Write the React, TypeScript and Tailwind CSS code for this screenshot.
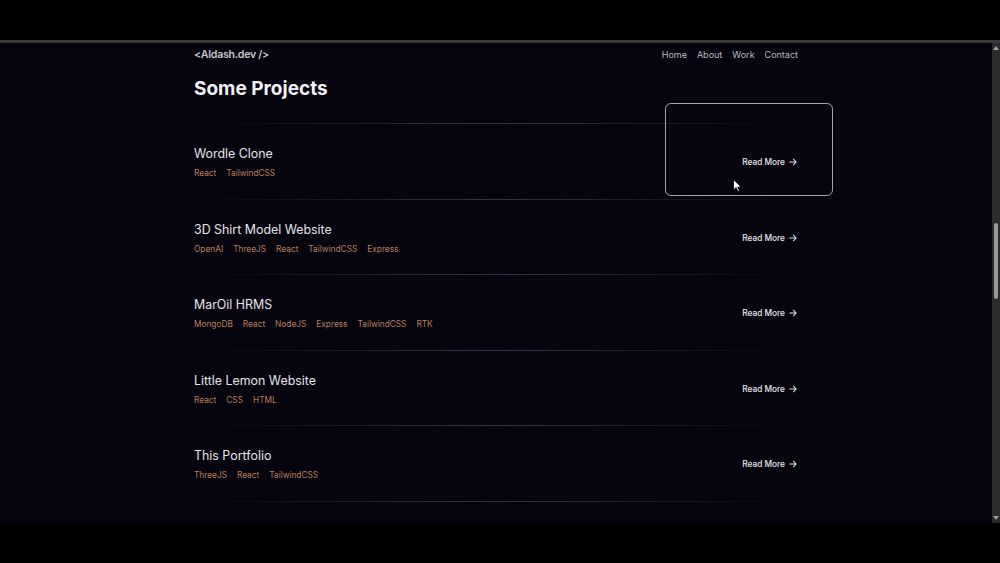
import React from "react";

const projects = [
  { title: "Wordle Clone", tags: ["React", "TailwindCSS"] },
  { title: "3D Shirt Model Website", tags: ["OpenAI", "ThreeJS", "React", "TailwindCSS", "Express"] },
  { title: "MarOil HRMS", tags: ["MongoDB", "React", "NodeJS", "Express", "TailwindCSS", "RTK"] },
  { title: "Little Lemon Website", tags: ["React", "CSS", "HTML"] },
  { title: "This Portfolio", tags: ["ThreeJS", "React", "TailwindCSS"] },
];

function Divider() {
  return <div className="h-px w-full bg-gradient-to-r from-transparent via-[#34344a] to-transparent" />;
}

function Arrow() {
  return (
    <svg width="8" height="8" viewBox="0 0 10 10" fill="none" stroke="#e8e8ec" strokeWidth="1.3" strokeLinecap="round" strokeLinejoin="round">
      <path d="M1 5h8M5.5 1.5 9 5l-3.5 3.5" />
    </svg>
  );
}

function Cursor() {
  return (
    <svg width="9" height="13" viewBox="0 0 9 13" className="absolute left-[539px] top-[56px] z-20">
      <path d="M0.5 0.5v10.5l2.6-2.4 1.8 4 1.6-.7-1.8-3.9h3.5z" fill="#ffffff" stroke="#000000" strokeWidth="0.8" />
    </svg>
  );
}

export default function App() {
  return (
    <div className="w-[1000px] h-[563px] bg-black flex flex-col overflow-hidden" style={{ fontFamily: "Inter, 'Noto Sans', sans-serif" }}>
      <div className="h-[40px] bg-black" />
      <div className="h-[3px] bg-[#3a3a3c]" />
      <div className="h-[480px] flex">
        <div className="flex-1 bg-[#05040f] overflow-hidden">
          <div className="w-[604px] mx-auto">
            <header className="h-[23px] flex items-center justify-between">
              <div className="text-[10.6px] font-semibold text-[#c9c9cf] tracking-tight">&lt;Aldash.dev /&gt;</div>
              <nav className="flex gap-[10px] text-[9px] text-[#b9b9c0]">
                <span>Home</span>
                <span>About</span>
                <span>Work</span>
                <span>Contact</span>
              </nav>
            </header>
            <h1 className="mt-[12px] text-[19px] leading-[22px] font-bold text-[#f2f2f4]">Some Projects</h1>
            <div className="mt-[23px]">
              {projects.map((p, i) => (
                <div key={p.title} className="relative">
                  <Divider />
                  <div className="h-[74.5px] pt-[2px] flex items-center justify-between">
                    <div className="flex flex-col gap-[6px]">
                      <div className="text-[12.4px] leading-[16px] text-[#e6e6ea]">{p.title}</div>
                      <div className="flex gap-[10px] text-[8.3px] leading-[10px] text-[#bd7f5a]">
                        {p.tags.map((t) => (
                          <span key={t}>{t}</span>
                        ))}
                      </div>
                    </div>
                    <div className="flex items-center gap-[4px] text-[8.3px] font-medium text-[#e8e8ec] mr-[1px]">
                      <span>Read More</span>
                      <Arrow />
                    </div>
                  </div>
                  {i === 0 && (
                    <>
                      <div className="absolute left-[471px] top-[-20px] w-[168px] h-[93px] border border-[#a3a3ad] rounded-[6px] z-10" />
                      <Cursor />
                    </>
                  )}
                </div>
              ))}
              <Divider />
            </div>
          </div>
        </div>
        <div className="w-[8px] bg-[#2c2c2e] flex flex-col items-center justify-between py-[3px] relative">
          <div className="w-0 h-0 border-l-[3px] border-r-[3px] border-b-[4px] border-l-transparent border-r-transparent border-b-[#a0a0a0]" />
          <div className="absolute left-[2px] top-[180px] w-[4px] h-[76px] rounded-full bg-[#9a9a9c]" />
          <div className="w-0 h-0 border-l-[3px] border-r-[3px] border-t-[4px] border-l-transparent border-r-transparent border-t-[#a0a0a0]" />
        </div>
      </div>
      <div className="flex-1 bg-black" />
    </div>
  );
}
